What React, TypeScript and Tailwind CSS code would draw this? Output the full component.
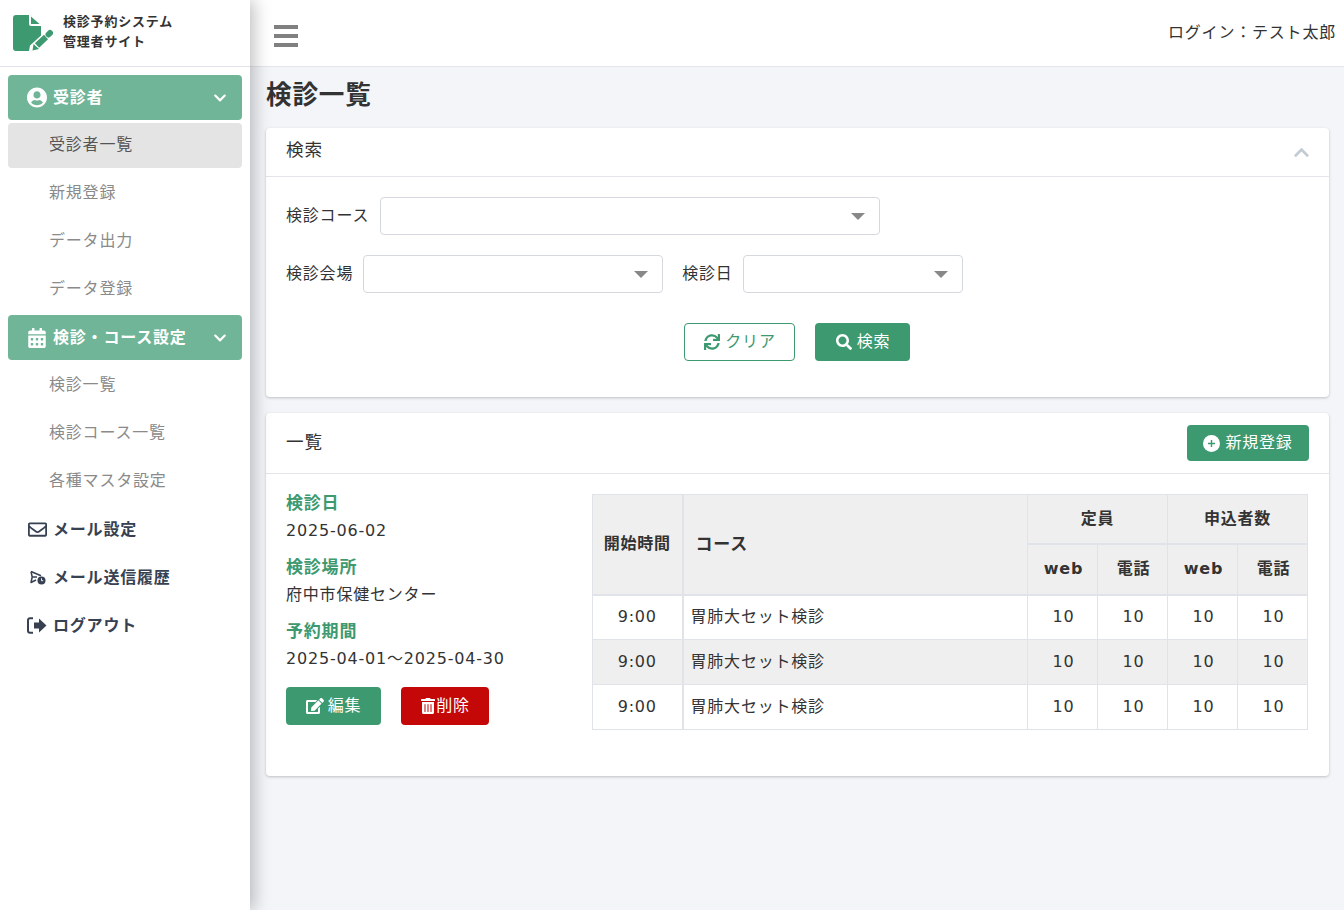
import React from 'react';
import { FaCalendarAlt, FaChevronDown, FaChevronUp, FaEdit, FaRegEnvelope, FaSearch, FaSync, FaTrashAlt, FaUserCircle } from 'react-icons/fa';

const rows = [
  { time: '9:00', course: '胃肺大セット検診', shaded: false },
  { time: '9:00', course: '胃肺大セット検診', shaded: true },
  { time: '9:00', course: '胃肺大セット検診', shaded: false },
];

function Logo() {
  return (
    <svg width="40" height="36" viewBox="0 0 40 36" className="shrink-0">
      <path d="M3 0H16V9a2 2 0 0 0 2 2h10v9.5L17 30.5 16 36H3a3 3 0 0 1-3-3V3a3 3 0 0 1 3-3z" fill="#3d9970" />
      <path d="M18 1.5L26.5 9H18z" fill="#3d9970" />
      <path d="M24 30.5L33 22" stroke="#3d9970" strokeWidth="6" />
      <path d="M19.5 35.5l1-6.5 5.5 5z" fill="#3d9970" />
      <path d="M35.5 19.5l1.5-1.5" stroke="#3d9970" strokeWidth="6" strokeLinecap="round" />
    </svg>
  );
}

function MailHistoryIcon() {
  return (
    <svg width="17" height="15" viewBox="0 0 17 15" fill="none">
      <path d="M2 1.5l10 4.2M2 1.5l1.2 5.5L2 12.5l5-2.5M3.2 7H8" stroke="#374151" strokeWidth="1.5" strokeLinejoin="round" />
      <circle cx="12.5" cy="10.5" r="4" fill="#374151" />
      <path d="M12.5 8.3v2.4h1.7" stroke="#ffffff" strokeWidth="0.9" />
    </svg>
  );
}

function LogoutIcon() {
  return (
    <svg width="20" height="17" viewBox="0 0 20 17" fill="none">
      <path d="M6 1.2H3a2 2 0 0 0-2 2v10.6a2 2 0 0 0 2 2h3" stroke="#374151" strokeWidth="2" />
      <path d="M7 5.5h5V1.5l7.5 7-7.5 7v-4H7z" fill="#374151" />
    </svg>
  );
}

function PlusIcon() {
  return (
    <svg width="17" height="17" viewBox="0 0 17 17">
      <circle cx="8.5" cy="8.5" r="8.5" fill="#ffffff" />
      <path d="M8.5 5v7M5 8.5h7" stroke="#3d9970" strokeWidth="1.4" />
    </svg>
  );
}

function GroupHead({ icon, label }: { icon: React.ReactNode; label: string }) {
  return (
    <div className="flex h-[45px] items-center rounded bg-[#70b598] pl-[19px] pr-[15px] font-bold text-white">
      <span className="flex w-[20px] justify-center">{icon}</span>
      <span className="ml-[6px] flex-1">{label}</span>
      <FaChevronDown className="text-[14px]" />
    </div>
  );
}

function SubItem({ label, active }: { label: string; active?: boolean }) {
  return (
    <div className={`flex h-[45px] items-center rounded pb-[2px] pl-[41px] ${active ? 'bg-[#e4e4e4] text-[#555555]' : 'text-[#8a8a8a]'}`}>
      {label}
    </div>
  );
}

function PlainItem({ icon, label }: { icon: React.ReactNode; label: string }) {
  return (
    <div className="flex h-[45px] items-center pl-[19px] font-bold text-[#374151]">
      <span className="flex w-[20px] justify-center">{icon}</span>
      <span className="ml-[6px]">{label}</span>
    </div>
  );
}

function Select({ width }: { width: string }) {
  return (
    <div className={`flex h-[38px] items-center justify-end rounded border border-[#d5d8de] bg-white pr-[14px] ${width}`}>
      <span className="h-0 w-0 border-x-[7px] border-t-[7px] border-x-transparent border-t-[#888888]" />
    </div>
  );
}

export default function App() {
  const thBase = 'border border-[#e0e3e8] bg-[#efefef] font-bold text-[#333333]';
  const numCell = 'border border-[#e0e3e8] pl-[2px] text-center';

  return (
    <div
      className="flex h-[910px] w-full overflow-hidden bg-[#f3f5f9] text-[16px] tracking-[0.05em] text-[#333333]"
      style={{ fontFamily: '"DejaVu Sans", "Noto Sans CJK JP", sans-serif' }}
    >
      {/* Sidebar */}
      <aside className="relative z-10 h-full w-[250px] shrink-0 bg-white shadow-[4px_0_16px_rgba(0,0,0,0.25)]">
        <div className="flex h-[67px] items-center gap-[10px] border-b border-[#e0e3ea] pl-[13px]">
          <Logo />
          <div className="-mt-[2px] text-[13px] font-bold leading-[20px] text-[#333333]">
            <div>検診予約システム</div>
            <div>管理者サイト</div>
          </div>
        </div>
        <nav className="flex flex-col gap-[3px] px-[8px] pt-[8px]">
          <GroupHead icon={<FaUserCircle className="text-[21px]" />} label="受診者" />
          <SubItem label="受診者一覧" active />
          <SubItem label="新規登録" />
          <SubItem label="データ出力" />
          <SubItem label="データ登録" />
          <GroupHead icon={<FaCalendarAlt className="text-[20px]" />} label="検診・コース設定" />
          <SubItem label="検診一覧" />
          <SubItem label="検診コース一覧" />
          <SubItem label="各種マスタ設定" />
          <PlainItem icon={<FaRegEnvelope className="text-[19px]" />} label="メール設定" />
          <PlainItem icon={<MailHistoryIcon />} label="メール送信履歴" />
          <PlainItem icon={<LogoutIcon />} label="ログアウト" />
        </nav>
      </aside>

      {/* Main */}
      <div className="min-w-0 flex-1">
        <header className="flex h-[67px] items-center justify-between border-b border-[#e3e5ea] bg-white pl-[24px] pr-[8px]">
          <div className="mt-[5px] flex w-[24px] flex-col gap-[5px]">
            <span className="h-[4px] bg-[#808080]" />
            <span className="h-[4px] bg-[#808080]" />
            <span className="h-[4px] bg-[#808080]" />
          </div>
          <div className="text-[#333333]">ログイン：テスト太郎</div>
        </header>

        <main className="pl-[16px] pr-[15px]">
          <h1 className="flex h-[61px] items-center pb-[4px] text-[25.6px] font-bold text-[#333333]">検診一覧</h1>

          <section className="rounded bg-white shadow-[0_1px_3px_rgba(0,0,0,0.22)]">
            <div className="flex h-[49px] items-center justify-between border-b border-[#e3e5ea] pb-[3px] pl-[20px] pr-[19px]">
              <span className="text-[17.6px]">検索</span>
              <FaChevronUp className="mt-[3px] text-[17px] text-[#c3cbd3]" />
            </div>
            <div className="px-[20px] pb-[36px] pt-[20px]">
              <div className="flex items-center gap-[11px]">
                <span>検診コース</span>
                <Select width="w-[500px]" />
              </div>
              <div className="mt-[20px] flex items-center">
                <span>検診会場</span>
                <span className="ml-[10px]"><Select width="w-[300px]" /></span>
                <span className="ml-[19px]">検診日</span>
                <span className="ml-[10px]"><Select width="w-[220px]" /></span>
              </div>
              <div className="mt-[30px] flex justify-center gap-[20px] pr-[2px]">
                <button className="flex h-[38px] w-[111px] items-center justify-center gap-[5px] rounded border border-[#3d9970] bg-white pl-[2px] text-[#3d9970]">
                  <FaSync className="text-[16px]" />
                  クリア
                </button>
                <button className="flex h-[38px] w-[95px] items-center justify-center gap-[5px] rounded bg-[#3d9970] pl-[2px] text-white">
                  <FaSearch className="text-[16px]" />
                  検索
                </button>
              </div>
            </div>
          </section>

          <section className="mt-[16px] rounded bg-white shadow-[0_1px_3px_rgba(0,0,0,0.22)]">
            <div className="flex h-[61px] items-center justify-between border-b border-[#e3e5ea] pl-[20px] pr-[20px]">
              <span className="pb-[2px] text-[17.6px]">一覧</span>
              <button className="flex h-[36px] w-[122px] items-center justify-center gap-[5px] rounded bg-[#3d9970] text-white">
                <PlusIcon />
                新規登録
              </button>
            </div>
            <div className="flex pb-[46px] pl-[20px] pr-[21px] pt-[20px]">
              <div className="w-[306px] shrink-0">
                <div className="text-[17px] font-bold leading-[18px] text-[#3d9970]">検診日</div>
                <div className="mt-[10px] leading-[18px]">2025-06-02</div>
                <div className="mt-[18px] text-[17px] font-bold leading-[18px] text-[#3d9970]">検診場所</div>
                <div className="mt-[10px] leading-[18px]">府中市保健センター</div>
                <div className="mt-[18px] text-[17px] font-bold leading-[18px] text-[#3d9970]">予約期間</div>
                <div className="mt-[10px] leading-[18px]">2025-04-01～2025-04-30</div>
                <div className="mt-[19px] flex gap-[20px]">
                  <button className="flex h-[38px] w-[95px] items-center justify-center gap-[4px] rounded bg-[#3d9970] text-white">
                    <FaEdit className="text-[18px]" />
                    編集
                  </button>
                  <button className="flex h-[38px] w-[88px] items-center justify-center rounded bg-[#c40808] text-white">
                    <FaTrashAlt className="text-[16px]" />
                    削除
                  </button>
                </div>
              </div>
              <table className="w-[715px] table-fixed border-collapse">
                <colgroup>
                  <col className="w-[90px]" />
                  <col className="w-[345px]" />
                  <col className="w-[70px]" />
                  <col className="w-[70px]" />
                  <col className="w-[70px]" />
                  <col className="w-[70px]" />
                </colgroup>
                <thead>
                  <tr className="h-[49px]">
                    <th rowSpan={2} className={`${thBase} border-b-2 border-r-2`}>開始時間</th>
                    <th rowSpan={2} className={`${thBase} border-b-2 pl-[12px] text-left text-[17px]`}>コース</th>
                    <th colSpan={2} className={`${thBase} border-b-2`}>定員</th>
                    <th colSpan={2} className={`${thBase} border-b-2`}>申込者数</th>
                  </tr>
                  <tr className="h-[51px]">
                    <th className={`${thBase} border-b-2 pl-[2px]`}>web</th>
                    <th className={`${thBase} border-b-2 pl-[2px]`}>電話</th>
                    <th className={`${thBase} border-b-2 pl-[2px]`}>web</th>
                    <th className={`${thBase} border-b-2 pl-[2px]`}>電話</th>
                  </tr>
                </thead>
                <tbody>
                  {rows.map((row, i) => (
                    <tr key={i} className={`h-[45px] ${row.shaded ? 'bg-[#efefef]' : 'bg-white'}`}>
                      <td className="border border-r-2 border-[#e0e3e8] text-center">{row.time}</td>
                      <td className="border border-[#e0e3e8] pl-[7px]">{row.course}</td>
                      <td className={numCell}>10</td>
                      <td className={numCell}>10</td>
                      <td className={numCell}>10</td>
                      <td className={numCell}>10</td>
                    </tr>
                  ))}
                </tbody>
              </table>
            </div>
          </section>
        </main>
      </div>
    </div>
  );
}
